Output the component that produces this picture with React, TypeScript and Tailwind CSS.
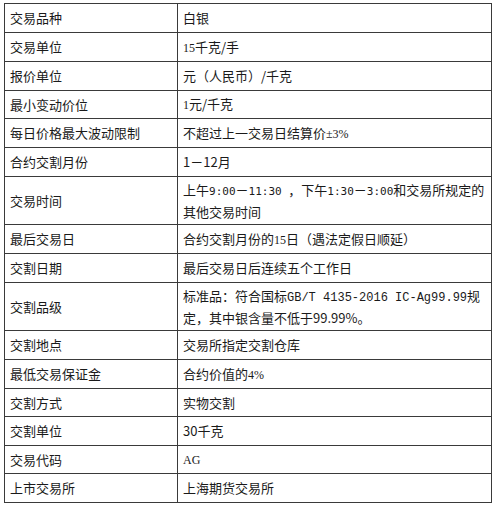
import React from "react";

const serif = "font-['Liberation_Serif'] text-[12px]";
const mono = "font-['Liberation_Mono'] text-[12px]";
const dmono = "font-['DejaVu_Sans_Mono'] text-[11px]";

type Row = { label: string; h: number; value: React.ReactNode };

const rows: Row[] = [
  { label: "交易品种", h: 29, value: "白银" },
  { label: "交易单位", h: 29, value: (<><span className={serif}>15</span>千克/手</>) },
  { label: "报价单位", h: 29, value: "元（人民币）/千克" },
  { label: "最小变动价位", h: 28, value: (<><span className={serif}>1</span>元/千克</>) },
  { label: "每日价格最大波动限制", h: 29, value: (<>不超过上一交易日结算价<span className={serif}>±3%</span></>) },
  { label: "合约交割月份", h: 29, value: "1－12月" },
  {
    label: "交易时间",
    h: 48,
    value: (
      <>
        上午<span className={dmono}>9:00</span>－<span className={dmono}>11:30 </span>，下午<span className={dmono}>1:30</span>－<span className={dmono}>3:00</span>和交易所规定的
        <br />
        其他交易时间
      </>
    ),
  },
  { label: "最后交易日", h: 29, value: (<>合约交割月份的<span className={serif}>15</span>日（遇法定假日顺延）</>) },
  { label: "交割日期", h: 29, value: "最后交易日后连续五个工作日" },
  {
    label: "交割品级",
    h: 48,
    value: (
      <>
        标准品：符合国标<span className={mono}>GB/T 4135-2016 IC-Ag99.99</span>规
        <br />
        定，其中银含量不低于99.99%。
      </>
    ),
  },
  { label: "交割地点", h: 29, value: "交易所指定交割仓库" },
  { label: "最低交易保证金", h: 29, value: (<>合约价值的<span className={serif}>4%</span></>) },
  { label: "交割方式", h: 28, value: "实物交割" },
  { label: "交割单位", h: 29, value: "30千克" },
  { label: "交易代码", h: 28, value: <span className={serif}>AG</span> },
  { label: "上市交易所", h: 29, value: "上海期货交易所" },
];

export default function App() {
  return (
    <div className="w-[500px] h-[508px] bg-white pt-[3px] pl-[4px] font-['Noto_Sans_CJK_SC',sans-serif] text-[13px] text-[#1a1a1a]">
      <div className="w-[488px] border-t border-x border-[#3a3a3a]">
        {rows.map((r, i) => (
          <div
            key={i}
            className="flex border-b border-[#3a3a3a] box-border"
            style={{ height: r.h }}
          >
            <div className="w-[173px] shrink-0 border-r border-[#3a3a3a] flex items-center pl-[5px] whitespace-nowrap">
              {r.label}
            </div>
            <div className="flex-1 flex items-center pl-[5px] whitespace-nowrap leading-[20px]">
              <div>{r.value}</div>
            </div>
          </div>
        ))}
      </div>
    </div>
  );
}
